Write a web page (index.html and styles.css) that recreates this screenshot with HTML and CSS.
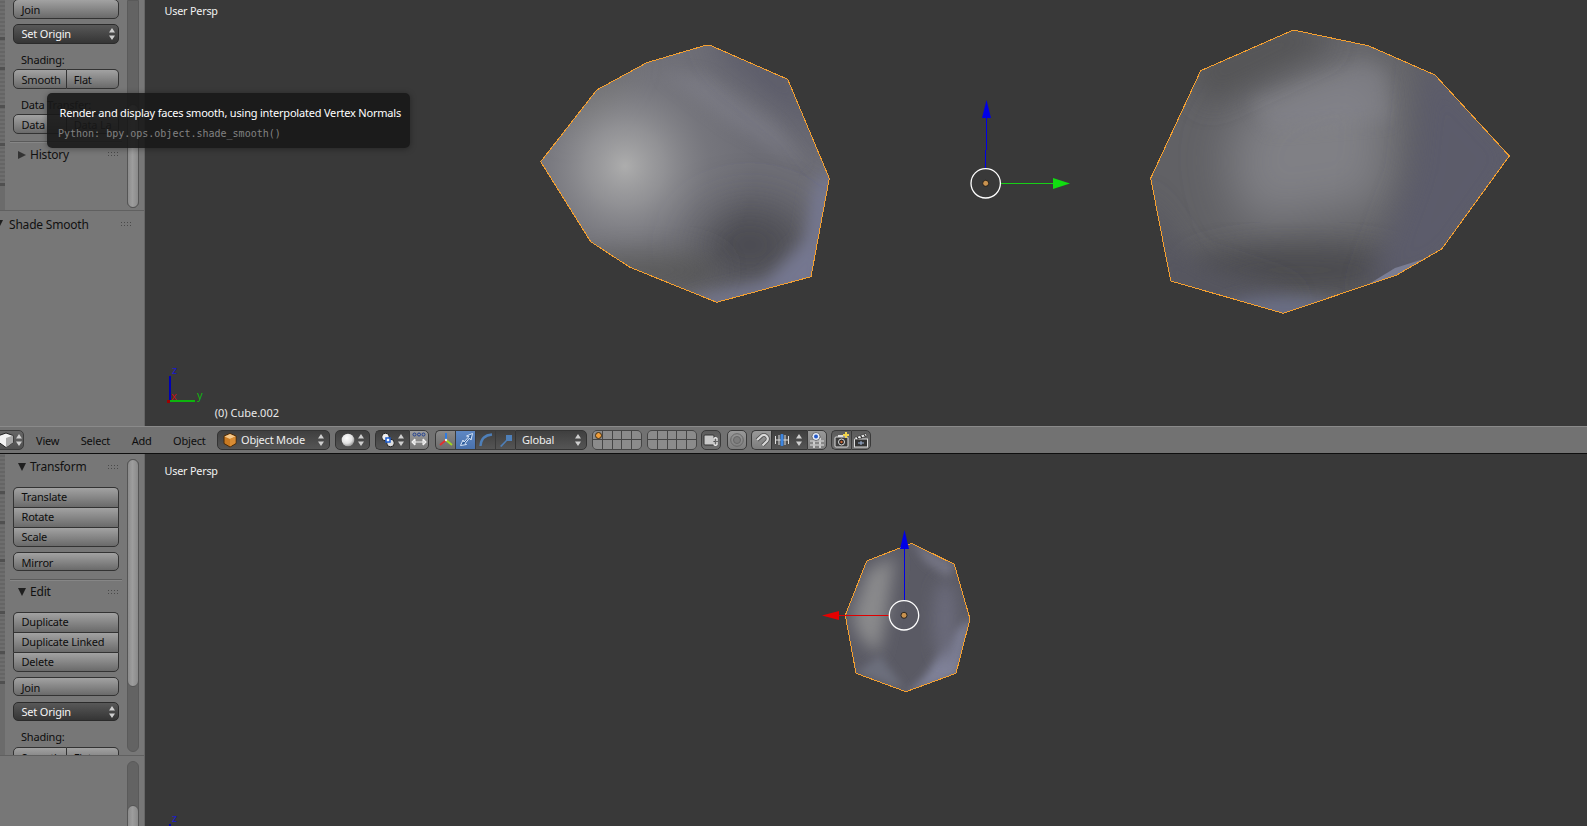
FILE: index.html
```html
<!DOCTYPE html>
<html lang="en">
<head>
<meta charset="utf-8">
<title>Blender</title>
<link rel="stylesheet" href="styles.css">
</head>
<body>
<svg class="defs" width="0" height="0" aria-hidden="true">
  <defs>
    <symbol id="updown" viewBox="0 0 8 14"><path d="M4 1 7 5.500H1zM4 13 1 8.500H7z"/></symbol>
    <filter id="b4" x="-50%" y="-50%" width="200%" height="200%"><feGaussianBlur stdDeviation="4"/></filter>
    <filter id="b8" x="-50%" y="-50%" width="200%" height="200%"><feGaussianBlur stdDeviation="8"/></filter>
    <filter id="b14" x="-50%" y="-50%" width="200%" height="200%"><feGaussianBlur stdDeviation="14"/></filter>
    <filter id="b24" x="-60%" y="-60%" width="220%" height="220%"><feGaussianBlur stdDeviation="24"/></filter>
    <radialGradient id="hl"><stop offset="0" stop-color="#adadad"/><stop offset=".3" stop-color="#9d9d9f" stop-opacity=".75"/><stop offset=".65" stop-color="#88888c" stop-opacity=".3"/><stop offset="1" stop-color="#808084" stop-opacity="0"/></radialGradient>
    <radialGradient id="ball" cx=".4" cy=".35" r=".7"><stop offset="0" stop-color="#fff"/><stop offset=".6" stop-color="#e2e2e2"/><stop offset="1" stop-color="#8d8d8d"/></radialGradient>
    <clipPath id="ca"><polygon points="540.700,161.700 596.700,90 646.700,62.700 706.700,45 711,45.700 787.700,79.300 829.300,178.300 811,276.700 716.700,302.300 630,267.300 590.700,241.700"/></clipPath>
    <clipPath id="cb"><polygon points="1150.700,178.300 1200.700,70.700 1293.300,30 1368.300,45.700 1435,75 1509.300,156 1441.700,249 1396.700,275 1283.300,313.300 1170.700,281"/></clipPath>
    <clipPath id="cc"><polygon points="845.300,615.300 866.700,561 911.700,543.300 954.300,564.300 970,619 956,673.300 906,691.700 856,673.300"/></clipPath>
  </defs>
</svg>
<div class="app">
  <section class="area area-top">
    <aside class="side">
      <div class="region region-top">
        <div class="strip">
          <i class="tab tab-a"></i><i class="tab tab-b"></i><i class="tab tab-c"></i><i class="tab tab-c"></i><i class="tab tab-a"></i>
        </div>
        <div class="panels panels-top">
          <button class="btn solo">Join</button>
          <div class="menu-btn">Set Origin<svg class="ud"><use href="#updown"/></svg></div>
          <div class="label">Shading:</div>
          <div class="btn-row"><span class="btn half">Smooth</span><span class="btn half">Flat</span></div>
          <div class="label">Data Transfer:</div>
          <div class="btn-row"><span class="btn half">Data</span><span class="btn half">Data La</span></div>
          <div class="sep"></div>
          <div class="phead"><i class="tri-right"></i><span>History</span><i class="dots"></i></div>
        </div>
        <div class="scroll scroll-top"><div class="thumb"></div></div>
      </div>
      <div class="operator">
        <div class="phead phead-op"><i class="tri-down"></i><span>Shade Smooth</span><i class="dots"></i></div>
      </div>
    </aside>
    <main class="view">
      <svg class="canvas" viewBox="145 0 1442 426" aria-hidden="true">
        <g clip-path="url(#ca)">
          <rect x="530" y="40" width="310" height="270" fill="#6e6e76"/>
          <ellipse cx="750" cy="245" rx="60" ry="42" fill="#48484f" filter="url(#b24)"/>
          <ellipse cx="640" cy="270" rx="80" ry="22" fill="#555" filter="url(#b14)"/>
          <polygon points="838,170 820,290 700,312 690,300 765,282 805,240 815,180" fill="#757790" filter="url(#b8)"/>
          <polygon points="704,30 795,66 840,178 800,125 722,62" fill="#5b5b69" filter="url(#b14)"/>
          <polygon points="590,80 640,58 600,120 560,140" fill="#6a6a6a" filter="url(#b14)"/>
          <polygon points="660,72 705,76 775,125 805,165 730,125" fill="#8a8a97" opacity=".35" filter="url(#b8)"/>
          <circle cx="625" cy="166" r="130" fill="url(#hl)"/>
        </g>
        <polygon class="outline" points="540.700,161.700 596.700,90 646.700,62.700 706.700,45 711,45.700 787.700,79.300 829.300,178.300 811,276.700 716.700,302.300 630,267.300 590.700,241.700"/>
        <g clip-path="url(#cb)">
          <rect x="1140" y="20" width="380" height="300" fill="#616165"/>
          <polygon points="1260,95 1365,58 1392,80 1385,205 1245,225 1225,150" fill="#808085" filter="url(#b24)"/>
          <polygon points="1250,100 1365,62 1385,72 1390,120 1270,130" fill="#84848b" opacity=".5" filter="url(#b8)"/>
          <ellipse cx="1300" cy="270" rx="115" ry="24" fill="#4c4c50" filter="url(#b14)"/>
          <polygon points="1425,50 1525,156 1450,262 1397,288 1365,296 1412,170" fill="#5b5b6b" filter="url(#b14)"/>
          <polygon points="1293,16 1190,60 1205,105 1335,44" fill="#545456" filter="url(#b14)"/>
          <polygon points="1140,190 1160,295 1283,325 1290,295 1190,262" fill="#55555f" filter="url(#b14)"/>
          <ellipse cx="1283" cy="310" rx="60" ry="13" fill="#6a6e85" filter="url(#b8)"/>
          <polygon points="1364,287 1397,275 1430,257 1395,268" fill="#7a7d93"/>
        </g>
        <polygon class="outline" points="1150.700,178.300 1200.700,70.700 1293.300,30 1368.300,45.700 1435,75 1509.300,156 1441.700,249 1396.700,275 1283.300,313.300 1170.700,281"/>
        <path class="giz" stroke="#0000e6" d="M985.500 168V150M986.500 150V118"/>
        <path d="M986.500 100 991 118H982z" fill="#0000e6"/>
        <path class="giz" stroke="#17cf17" d="M1001 183.500H1054"/>
        <path d="M1070 183.500 1053 189V178z" fill="#11dd11"/>
        <circle class="ring" cx="985.700" cy="183.300" r="14.700"/>
        <circle class="dot" cx="985.700" cy="183.300" r="3"/>
        <path class="giz thick" stroke="#0000b4" d="M170 376V401"/>
        <path class="giz thick" stroke="#0db40d" d="M170 401H195"/>
        <rect x="167" y="400" width="3" height="3" fill="#a00000"/>
      </svg>
      <span class="vlabel">User Persp</span>
      <span class="axis ax-z">z</span><span class="axis ax-y">y</span><span class="axis ax-x">x</span>
      <span class="objname">(0) Cube.002</span>
    </main>
  </section>

  <header class="hdr">
    <div class="hb hb-view">
      <svg class="ic16" viewBox="0 0 16 16"><path d="M1 3.500 8 1 15 3.500V10.500L8 15.500 1 10.500z" fill="#f2f2f2" stroke="#222"/><path d="M8 6V15.500L15 10.500V3.500z" fill="#a8a8a8"/></svg>
      <svg class="ud"><use href="#updown"/></svg>
    </div>
    <nav class="menus"><span>View</span><span>Select</span><span>Add</span><span>Object</span></nav>
    <div class="dd dd-mode">
      <svg class="ic16" viewBox="0 0 16 16"><path d="M8 1.500 14 4V11.500L8 15 2 11.500V4z" fill="#c97a22" stroke="#4a2a08"/><path d="M2.500 4.500 8 7 13.500 4.500 8 2z" fill="#f4c78a"/><path d="M8 7V14.500L13.500 11V4.500z" fill="#d88c34"/></svg>
      <span class="dd-text">Object Mode</span><svg class="ud"><use href="#updown"/></svg>
    </div>
    <div class="dd dd-shade">
      <svg class="ic16" viewBox="0 0 16 16"><circle cx="8" cy="8" r="6.300" fill="url(#ball)"/></svg>
      <svg class="ud"><use href="#updown"/></svg>
    </div>
    <div class="group">
      <div class="dd dd-pivot flat-r">
        <svg class="ic16" viewBox="0 0 16 16"><circle cx="5.500" cy="5" r="3.800" fill="#eee" stroke="#222"/><circle cx="10.500" cy="11" r="3.800" fill="#ddd" stroke="#222"/><rect x="6" y="6" width="4" height="4" fill="#fff" stroke="#1b5cd0" stroke-width="1.500"/></svg>
        <svg class="ud"><use href="#updown"/></svg>
      </div>
      <div class="tb tb-light flat-l">
        <svg class="ic16" viewBox="0 0 16 16"><g fill="none" stroke="#1f3f90"><circle cx="3.500" cy="2.500" r="1.500"/><circle cx="8" cy="2.500" r="1.500"/><circle cx="12.500" cy="2.500" r="1.500"/></g><path d="M1 10H15M4 7 1 10 4 13M12 7 15 10 12 13M4 7V13M12 7V13" fill="none" stroke="#f2f2f2" stroke-width="1.100"/></svg>
      </div>
    </div>
    <div class="group manip">
      <div class="tb tb-grey flat-r">
        <svg class="ic16" viewBox="0 0 16 16"><path d="M8 8V1" stroke="#2f7be0" stroke-width="2"/><path d="M8 8 2 13" stroke="#e03030" stroke-width="2"/><path d="M8 8 14 13" stroke="#a0d820" stroke-width="2"/><circle cx="8" cy="8" r="1.200" fill="#eee"/></svg>
      </div>
      <div class="tb tb-blue flat-both">
        <svg class="ic16" viewBox="0 0 16 16"><path d="M2.500 13.500 5 8 6 10 11 4.500 8.500 4 14.500 1.500 13 8 11.500 6 7 11.500 8.500 12.500z" fill="#2c5c9c" stroke="#d8e6f8" stroke-width="1"/></svg>
      </div>
      <div class="tb tb-dark flat-both">
        <svg class="ic16" viewBox="0 0 16 16"><path d="M2.500 14C3 7 7 3 14 2.500" fill="none" stroke="#4e7fb8" stroke-width="2.400"/></svg>
      </div>
      <div class="tb tb-dark flat-both">
        <svg class="ic16" viewBox="0 0 16 16"><path d="M2 14 8 8V3H14V9H9L3.500 15z" fill="#4e7fb8"/></svg>
      </div>
      <div class="dd dd-global flat-l"><span class="dd-text">Global</span><svg class="ud"><use href="#updown"/></svg></div>
    </div>
    <div class="layers">
      <i class="active"></i><i></i><i></i><i></i><i></i><i></i><i></i><i></i><i></i><i></i>
    </div>
    <div class="layers">
      <i></i><i></i><i></i><i></i><i></i><i></i><i></i><i></i><i></i><i></i>
    </div>
    <div class="tb tb-mid lock">
      <svg class="ic16" viewBox="0 0 16 16"><rect x="1" y="3" width="10" height="10" rx="1" fill="#c8c8c8" stroke="#333"/><path d="M11 9V6.500Q12.500 5 14 6.500V9M11 10V12.500Q12.500 14 14 12.500V10" fill="none" stroke="#eee" stroke-width="1.300"/></svg>
    </div>
    <div class="tb tb-soft round-gap">
      <svg class="ic16" viewBox="0 0 16 16"><circle cx="8" cy="8" r="6.300" fill="none" stroke="#666"/><circle cx="8" cy="8" r="3.500" fill="#7c7c7c" stroke="#666"/></svg>
    </div>
    <div class="group snap">
      <div class="tb tb-soft flat-r">
        <svg class="ic16" viewBox="0 0 16 16"><path d="M3 8 8 3.500A3.800 3.800 0 0 1 13 9L8.500 13.500" fill="none" stroke="#4e4e4e" stroke-width="3.800"/><path d="M3 8 8 3.500A3.800 3.800 0 0 1 13 9L8.500 13.500" fill="none" stroke="#d8d8d8" stroke-width="2.200"/></svg>
      </div>
      <div class="dd dd-snap flat-both">
        <svg class="ic16" viewBox="0 0 16 16"><path d="M1.500 4V12M14.500 4V12M5 3V13M11 3V13M1 8H15" stroke="#ddd" fill="none"/><rect x="6.500" y="2" width="3" height="12" rx="1" fill="#3e86e0"/></svg>
        <svg class="ud"><use href="#updown"/></svg>
      </div>
      <div class="tb tb-soft flat-l">
        <svg class="ic16" viewBox="0 0 16 16"><path d="M1 9H15M1 13H15M5 6V16M11 6V16" stroke="#f4f4f4" stroke-width="1.300"/><path d="M1 9H15M1 13H15" stroke="#222" stroke-width=".4"/><circle cx="7" cy="4.500" r="4" fill="#e8edf8" stroke="#333" stroke-width=".6"/><circle cx="7" cy="4.500" r="2" fill="#2459c9"/></svg>
      </div>
    </div>
    <div class="group render">
      <div class="tb tb-mid flat-r">
        <svg class="ic16" viewBox="0 0 16 16"><rect x="1" y="5" width="13" height="10" rx="1" fill="#3b3b3b" stroke="#ddd"/><rect x="4" y="3" width="5" height="2" fill="#ddd"/><circle cx="7.500" cy="10" r="3" fill="#222" stroke="#ddd"/><circle cx="7.500" cy="10" r="1.200" fill="#c63"/><path d="M12 0V6M9 3H15" stroke="#f2d44c" stroke-width="2"/></svg>
      </div>
      <div class="tb tb-mid flat-l">
        <svg class="ic16" viewBox="0 0 16 16"><rect x="1.500" y="7" width="13" height="8" fill="#333" stroke="#ddd"/><path d="M1.500 5.500 13 1.500 14 4 2.500 8z" fill="#f0f0f0" stroke="#222" stroke-width=".6"/><path d="M4 5 5.500 7M7.500 3.500 9 6M11 2.500 12.500 4.500" stroke="#222" stroke-width="1.200"/><path d="M5 11H11M8 9V13" stroke="#9db4d8"/></svg>
      </div>
    </div>
  </header>

  <section class="area area-bottom">
    <aside class="side">
      <div class="region region-bottom">
        <div class="strip">
          <i class="tab tab-a"></i><i class="tab tab-b"></i><i class="tab tab-c"></i><i class="tab tab-d"></i><i class="tab tab-a"></i><i class="tab tab-b"></i>
        </div>
        <div class="panels panels-bottom">
          <div class="phead phead-first"><i class="tri-down"></i><span>Transform</span><i class="dots"></i></div>
          <div class="stack">
            <span class="btn">Translate</span><span class="btn">Rotate</span><span class="btn">Scale</span>
          </div>
          <button class="btn solo gap5">Mirror</button>
          <div class="sep sep-b"></div>
          <div class="phead phead-edit"><i class="tri-down"></i><span>Edit</span><i class="dots"></i></div>
          <div class="stack">
            <span class="btn">Duplicate</span><span class="btn">Duplicate Linked</span><span class="btn">Delete</span>
          </div>
          <button class="btn solo gap5">Join</button>
          <div class="menu-btn">Set Origin<svg class="ud"><use href="#updown"/></svg></div>
          <div class="label">Shading:</div>
          <div class="btn-row"><span class="btn half">Smooth</span><span class="btn half">Flat</span></div>
        </div>
        <div class="scroll scroll-bottom"><div class="thumb"></div></div>
      </div>
      <div class="operator operator-bottom">
        <div class="scroll scroll-op"><div class="thumb"></div></div>
      </div>
    </aside>
    <main class="view">
      <svg class="canvas" viewBox="145 454 1442 372" aria-hidden="true">
        <g clip-path="url(#cc)">
          <rect x="840" y="535" width="140" height="165" fill="#5a5a64"/>
          <polygon points="868,570 895,556 886,620 878,655 858,635 852,615" fill="#8a8a8c" filter="url(#b8)"/>
          <polygon points="972,619 958,676 906,696 925,676 955,630" fill="#7f8198" filter="url(#b4)"/>
          <polygon points="912,541 956,564 948,578 925,562" fill="#737382" filter="url(#b4)"/>
          <ellipse cx="945" cy="620" rx="12" ry="40" fill="#6a6a7a" filter="url(#b8)"/>
          <polygon points="856,673 880,655 905,690" fill="#6c6e7c" filter="url(#b4)"/>
        </g>
        <polygon class="outline" points="845.300,615.300 866.700,561 911.700,543.300 954.300,564.300 970,619 956,673.300 906,691.700 856,673.300"/>
        <path class="giz" stroke="#0000e6" d="M904.500 600.500V549"/>
        <path d="M904.500 530 909 549H900z" fill="#0000e6"/>
        <path class="giz" stroke="#e00000" d="M889 615.500H839"/>
        <path d="M822 615.500 839 611V620z" fill="#e60000"/>
        <circle class="ring" cx="904" cy="615.300" r="14.700"/>
        <circle class="dot" cx="904" cy="615.300" r="3"/>
        <path class="giz thick" stroke="#0000b4" d="M170 824V830"/>
      </svg>
      <span class="vlabel">User Persp</span>
      <span class="axis ax-z2">z</span>
    </main>
  </section>

  <div class="tooltip">
    <div class="tip-main">Render and display faces smooth, using interpolated Vertex Normals</div>
    <div class="tip-py">Python: bpy.ops.object.shade_smooth()</div>
  </div>
</div>
</body>
</html>
```
FILE: styles.css
```css
* { box-sizing: border-box; }
html, body { margin: 0; height: 100%; overflow: hidden; background: #393939; }
body { font-family: "Noto Sans", "Open Sans", sans-serif; font-size: 11px; letter-spacing: -.2px; color: #0d0d0d; }
.defs { position: absolute; }
.app { position: relative; width: 1587px; height: 826px; display: flex; flex-direction: column; }

.area { display: flex; min-height: 0; }
.area-top { height: 427px; border-bottom: 1px solid #8a8a8a; }
.area-bottom { flex: 1; }

.side { width: 145px; flex: none; display: flex; flex-direction: column; background: #777; border-right: 1px solid #666; }
.region { display: flex; flex: none; overflow: hidden; }
.region-top { height: 211px; border-bottom: 1px solid #606060; }
.region-bottom { height: 302px; border-bottom: 1px solid #606060; }

.strip { width: 5px; flex: none; display: flex; flex-direction: column; background: #6b6b6b; }
.tab { display: block; flex: none; border-bottom: 3px solid #505050; background: repeating-linear-gradient(0deg, #6e6e6e 0 2px, #656565 2px 4px); }
.tab-a { height: 40px; }
.tab-b { height: 30px; }
.tab-c { height: 38px; }
.tab-d { height: 52px; }

.panels { width: 122px; flex: none; padding: 0 0 0 8px; overflow: hidden; }
.panels-top { margin-top: -1px; }

.btn { display: block; height: 19.500px; padding: 0 0 0 7.500px; font: inherit; letter-spacing: inherit; color: inherit; text-align: left; border: 1px solid #333; background: linear-gradient(#a2a2a2, #6a6a6a); }
span.btn { line-height: 19px; }
button.btn { padding-top: 1px; line-height: 18px; }
.solo { width: 106px; border-radius: 5px; }
.gap5 { margin-top: 5px; }

.stack { width: 106px; display: flex; flex-direction: column; }
.stack .btn { height: 20px; line-height: 17px; border-bottom: 0; }
.stack .btn:first-child { border-radius: 5px 5px 0 0; }
.stack .btn:last-child { border-radius: 0 0 5px 5px; border-bottom: 1px solid #333; }

.btn-row { width: 106px; display: flex; }
.half { flex: 1; }
.half:first-child { border-radius: 5px 0 0 5px; }
.half:last-child { border-radius: 0 5px 5px 0; border-left: 0; padding-left: 7px; }

.menu-btn { width: 106px; height: 19.500px; margin-top: 5.500px; padding: 1px 0 0 7.500px; line-height: 18px; color: #f4f4f4; display: flex; justify-content: space-between; align-items: center; border: 1px solid #2b2b2b; border-radius: 5px; background: linear-gradient(#585858, #353535); }
.ud { width: 8px; height: 14px; fill: #cfcfcf; flex: none; margin-right: 2px; }

.label { height: 25.500px; padding: 8px 0 0 8px; line-height: 16px; }
.sep { width: 112px; height: 1px; margin: 7px 0 0 -3px; background: #5a5a5a; box-shadow: 0 1px 0 #868686; }
.sep-b { margin-top: 7.500px; }

.phead { display: flex; align-items: center; height: 24px; font-size: 12px; letter-spacing: -.2px; color: #111; position: relative; padding-left: 5px; }
.phead span { margin-left: 4px; }
.panels-top .phead { padding-top: 2px; }
.phead-first { height: 25px; margin-bottom: 7.500px; }
.phead-edit { height: 23.500px; margin-top: .5px; margin-bottom: 8.200px; }
.tri-right { width: 0; height: 0; border-style: solid; border-width: 4.500px 0 4.500px 8px; border-color: transparent transparent transparent #333; flex: none; }
.tri-down { width: 0; height: 0; border-style: solid; border-width: 8px 4.500px 0; border-color: #1f1f1f transparent transparent; flex: none; }
.dots { width: 12px; height: 6px; position: absolute; right: 8px; top: 50%; margin-top: -3px; background-image: radial-gradient(circle, #4a4a4a 0 .6px, transparent 1px); background-size: 3px 3px; }

.scroll { width: 12px; flex: none; margin: 0 5px 0 0; border-radius: 6px; background: #636363; border: 1px solid #5a5a5a; display: flex; flex-direction: column; }
.scroll-top { height: 208px; justify-content: flex-end; border-top-left-radius: 0; border-top-right-radius: 0; }
.scroll-top .thumb { height: 104px; }
.scroll-bottom { height: 293px; margin-top: 5px; }
.scroll-bottom .thumb { height: 228px; }
.thumb { border-radius: 6px; background: linear-gradient(90deg, #8c8c8c, #9d9d9d 45%, #8a8a8a); border: 1px solid #555; margin: -1px; }

.operator { flex: 1; display: flex; align-items: flex-start; }
.phead-op { width: 144px; flex: none; padding-left: 0; margin: 1px 0 0 -5px; }
.phead-op span { margin-left: 6px; }
.phead-op .dots { right: 7px; }
.operator-bottom { padding-top: 5px; }
.scroll-op { height: 80px; padding-top: 44px; margin-left: auto; }
.scroll-op .thumb { height: 40px; }

.view { flex: 1; position: relative; background: #393939; overflow: hidden; }
.canvas { position: absolute; left: 0; top: 0; width: 1442px; height: 100%; }
.outline { fill: none; stroke: #f5a030; stroke-width: 1; shape-rendering: crispEdges; }
.giz { fill: none; stroke-width: 1; shape-rendering: crispEdges; }
.thick { stroke-width: 2; }
.ring { fill: none; stroke: #fff; stroke-width: 1.300; }
.dot { fill: #c9924f; stroke: #111; stroke-width: .8; }
.vlabel { position: absolute; left: 19.500px; top: 3px; color: #f2f2f2; line-height: 16px; font-size: 10.800px; letter-spacing: -.2px; }
.area-bottom .vlabel { top: 9px; }
.objname { position: absolute; left: 69.700px; top: 405px; color: #e8e8e8; line-height: 16px; font-size: 11px; letter-spacing: 0; }
.axis { position: absolute; font-size: 11px; line-height: 12px; letter-spacing: 0; }
.ax-z { left: 27px; top: 364px; color: #1a1ad0; }
.ax-y { left: 52px; top: 389px; color: #11b511; }
.ax-x { left: 26px; top: 390px; color: #c01010; }
.ax-z2 { left: 27px; top: 358px; color: #1a1ad0; }

.hdr { height: 27px; flex: none; display: flex; align-items: center; background: #727272; border-bottom: 1px solid #0e0e0e; padding-bottom: 1px; overflow: hidden; }
.ic16 { width: 16px; height: 16px; flex: none; display: block; }
.hb-view { width: 34px; height: 20px; margin-left: -10px; display: flex; align-items: center; justify-content: flex-end; gap: 1px; border: 1px solid #3c3c3c; border-radius: 5px; background: linear-gradient(#666, #505050); flex: none; }
.hb-view .ud { margin-right: 0; }
.menus { display: flex; gap: 21.500px; margin-left: 12px; width: 168px; flex: none; padding-top: 1px; }
.dd { height: 20px; flex: none; display: flex; align-items: center; color: #eee; border: 1px solid #333; border-radius: 5px; background: linear-gradient(#3f3f3f, #555); padding: 0 2px 0 4px; justify-content: space-between; }
.dd-text { flex: 1; padding: 1px 0 0 3px; line-height: 18px; }
.dd-mode { width: 113px; margin-left: 13px; }
.dd-shade { width: 35px; margin-left: 5px; }
.group { display: flex; flex: none; margin-left: 5px; }
.dd-pivot { width: 34px; }
.manip { margin-left: 6px; }
.tb { width: 20px; height: 20px; flex: none; display: flex; align-items: center; justify-content: center; border: 1px solid #3a3a3a; border-radius: 5px; }
.tb-light { background: linear-gradient(#9c9c9c, #777); }
.tb-soft { background: linear-gradient(#999, #7d7d7d); }
.tb-grey { background: linear-gradient(#8a8a8a, #6c6c6c); }
.tb-blue { background: linear-gradient(#5e88c4, #4a72ac); }
.tb-dark { background: linear-gradient(#3f3f3f, #555); }
.tb-mid { background: linear-gradient(#5c5c5c, #6e6e6e); }
.flat-r { border-top-right-radius: 0; border-bottom-right-radius: 0; border-right: 0; }
.flat-l { border-top-left-radius: 0; border-bottom-left-radius: 0; }
.flat-both { border-radius: 0; border-right: 0; }
.dd-global { width: 72px; padding-left: 3px; }
.lock { margin-left: 4px; }
.round-gap { margin-left: 6px; }
.layers { width: 50px; height: 20px; flex: none; margin-left: 5px; display: grid; grid-template-columns: repeat(5, 1fr); grid-template-rows: repeat(2, 1fr); gap: 1px; background: #454545; border: 1px solid #454545; border-radius: 5px; overflow: hidden; }
.layers i { display: block; background: #8b8b8b; position: relative; }
.layers .active::after { content: ""; position: absolute; left: 2px; top: 1px; width: 5px; height: 5px; border-radius: 50%; background: #ef9d3a; border: 1px solid #3a2a14; }
.snap { margin-left: 4px; }
.dd-snap { width: 36px; padding: 0 2px; }
.render { margin-left: 4px; }

.tooltip { position: absolute; left: 46.500px; top: 93px; width: 363px; height: 55px; padding: 12px 0 0 13px; border-radius: 5px; background: rgba(24, 24, 24, .91); box-shadow: 0 1px 6px rgba(0, 0, 0, .35); }
.tip-main { color: #fff; line-height: 16px; white-space: nowrap; }
.tip-py { margin: 5px 0 0 -1.500px; color: #828282; line-height: 16px; font-family: "DejaVu Sans Mono", monospace; font-size: 10px; letter-spacing: 0; white-space: nowrap; }
```
